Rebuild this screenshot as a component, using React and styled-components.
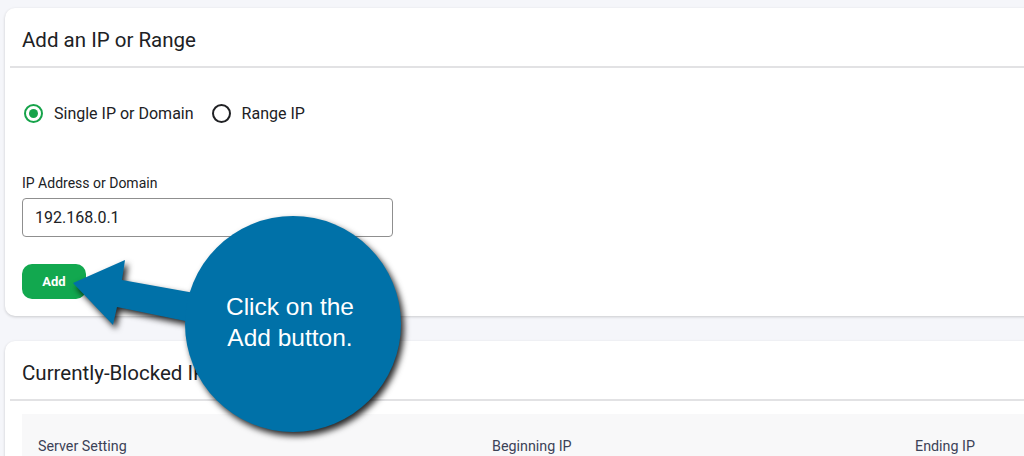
import React from "react";
import styled, { createGlobalStyle } from "styled-components";

const Global = createGlobalStyle`
  html, body { margin: 0; padding: 0; }
  body {
    background: #f5f6fa;
    font-family: Roboto, "Liberation Sans", Arial, sans-serif;
    color: #202124;
    overflow: hidden;
    width: 1024px;
    height: 456px;
  }
`;

const Page = styled.div`
  position: relative;
  height: 456px;
  overflow: hidden;
  box-sizing: border-box;
  padding: 8px 0 0 5px;
  display: flex;
  flex-direction: column;
  gap: 25px;
`;

const Card = styled.section`
  flex-shrink: 0;
  width: 1040px;
  background: #fff;
  border-radius: 10px;
  box-shadow: 0 1px 3px rgba(0, 0, 0, 0.18);
  padding-bottom: ${(p) => p.$pb || 0}px;
`;

const CardHeader = styled.div`
  margin: 0 0 0 5px;
  height: 60px;
  box-sizing: border-box;
  border-bottom: 2px solid #e2e2e4;
  display: flex;
  align-items: center;
  padding: 5px 0 0 12px;
  font-size: 20.5px;
  font-weight: 400;
  color: #202124;
`;

const Body = styled.div`
  padding: 0 0 0 17px;
`;

const RadioRow = styled.div`
  display: flex;
  align-items: center;
  gap: 16px;
  margin-top: 34px;
  height: 22px;
`;

const RadioItem = styled.label`
  display: flex;
  align-items: center;
  gap: 11px;
  font-size: 16px;
  color: #202124;
  padding-left: 2px;
`;

const RadioCircle = styled.span`
  width: 19px;
  height: 19px;
  box-sizing: border-box;
  border-radius: 50%;
  border: 2px solid ${(p) => (p.$checked ? "#16a34a" : "#202124")};
  display: flex;
  align-items: center;
  justify-content: center;
  &::after {
    content: "";
    width: 9px;
    height: 9px;
    border-radius: 50%;
    background: ${(p) => (p.$checked ? "#16a34a" : "transparent")};
  }
`;

const FieldLabel = styled.div`
  margin-top: 51px;
  font-size: 14px;
  color: #202124;
  height: 16px;
  line-height: 16px;
`;

const Input = styled.div`
  margin-top: 7px;
  width: 371px;
  height: 39px;
  box-sizing: border-box;
  border: 1px solid #8f8f8f;
  border-radius: 4px;
  display: flex;
  align-items: center;
  padding-left: 12px;
  font-size: 16px;
  color: #202124;
`;

const AddButton = styled.button`
  margin-top: 27px;
  width: 64px;
  height: 35px;
  border: none;
  border-radius: 10px;
  background: #12a84f;
  color: #fff;
  font-family: Roboto, "Liberation Sans", Arial, sans-serif;
  font-weight: 700;
  font-size: 13px;
  display: block;
`;

const TableHead = styled.div`
  margin: 13px 0 0 17px;
  background: #f8f8f9;
  height: 60px;
  box-sizing: border-box;
  padding: 3px 0 0 16px;
  display: grid;
  grid-template-columns: 454px 423px 1fr;
  align-items: center;
  font-size: 14.3px;
  color: #3c4257;
`;

const HeadCell = styled.div``;

const Callout = styled.div`
  position: absolute;
  left: 0;
  top: 0;
  width: 420px;
  height: 456px;
  pointer-events: none;
`;

const CalloutSvg = styled.svg`
  position: absolute;
  left: 0;
  top: 0;
  overflow: visible;
  filter: drop-shadow(3px 4px 3px rgba(0, 0, 0, 0.85));
`;

const CalloutText = styled.div`
  position: absolute;
  left: 182px;
  top: 291px;
  width: 216px;
  text-align: center;
  font-family: "Liberation Sans", Arial, sans-serif;
  font-size: 24.5px;
  line-height: 31px;
  color: #fff;
`;

export default function App() {
  return (
    <>
      <Global />
      <Page>
        <Card $pb={17}>
          <CardHeader>Add an IP or Range</CardHeader>
          <Body>
            <RadioRow>
              <RadioItem>
                <RadioCircle $checked />
                Single IP or Domain
              </RadioItem>
              <RadioItem>
                <RadioCircle />
                Range IP
              </RadioItem>
            </RadioRow>
            <FieldLabel>IP Address or Domain</FieldLabel>
            <Input>192.168.0.1</Input>
            <AddButton>Add</AddButton>
          </Body>
        </Card>
        <Card $pb={40}>
          <CardHeader>Currently-Blocked IPs</CardHeader>
          <TableHead>
            <HeadCell>Server Setting</HeadCell>
            <HeadCell>Beginning IP</HeadCell>
            <HeadCell>Ending IP</HeadCell>
          </TableHead>
        </Card>
        <Callout>
          <CalloutSvg width="420" height="456" viewBox="0 0 420 456">
            <g fill="#0071a8">
              <polygon points="73,283 125,260 122,280 200,294 200,324 117,307 113,325" />
              <circle cx="293" cy="324" r="108" />
            </g>
          </CalloutSvg>
          <CalloutText>
            Click on the
            <br />
            Add button.
          </CalloutText>
        </Callout>
      </Page>
    </>
  );
}
